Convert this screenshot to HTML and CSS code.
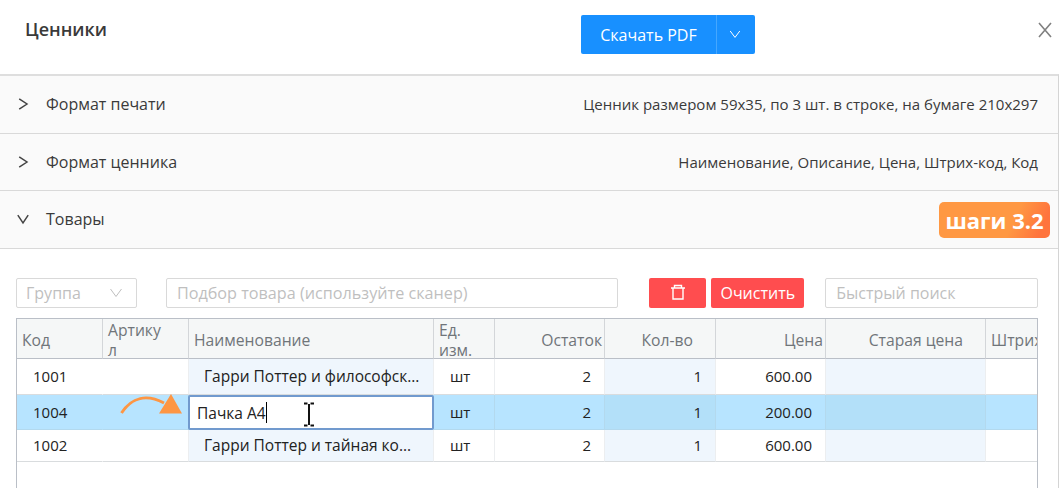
FILE: index.html
```
<!DOCTYPE html>
<html lang="ru">
<head>
    <meta charset="UTF-8">
    <meta name="viewport" content="width=device-width, initial-scale=1.0">
    <title>Ценники</title>
    <link rel="stylesheet" href="styles.css">
</head>
<body>
    <div class="modal">
        <header class="modal-header">
            <h1 class="title">Ценники</h1>
            <div class="download">
                <button class="download-btn">Скачать PDF</button>
                <button class="download-more" aria-label="Ещё">
                    <svg width="12" height="9" viewBox="0 0 12 9"><path d="M1.2 1 L6 7.4 L10.8 1"/></svg>
                </button>
            </div>
            <button class="close" aria-label="Закрыть">
                <svg width="16" height="16" viewBox="0 0 16 16"><path d="M2 1 L14 15 M14 1 L2 15"/></svg>
            </button>
        </header>

        <div class="collapse">
            <div class="panel">
                <svg class="arrow" width="14" height="14" viewBox="0 0 14 14"><path d="M3.2 1.8 L11 7 L3.2 12.2"/></svg>
                <span class="panel-name">Формат печати</span>
                <span class="panel-extra">Ценник размером 59x35, по 3 шт. в строке, на бумаге 210x297</span>
            </div>
            <div class="panel">
                <svg class="arrow" width="14" height="14" viewBox="0 0 14 14"><path d="M3.2 1.8 L11 7 L3.2 12.2"/></svg>
                <span class="panel-name">Формат ценника</span>
                <span class="panel-extra">Наименование, Описание, Цена, Штрих-код, Код</span>
            </div>
            <div class="panel">
                <svg class="arrow" width="14" height="14" viewBox="0 0 14 14"><path d="M1.8 3.2 L7 11 L12.2 3.2"/></svg>
                <span class="panel-name">Товары</span>
                <span class="step-badge">шаги 3.2</span>
            </div>

            <div class="content">
                <div class="toolbar">
                    <div class="field group"><span>Группа</span>
                        <svg width="14" height="10" viewBox="0 0 14 10"><path d="M1.5 1 L7 8.5 L12.5 1"/></svg>
                    </div>
                    <div class="field pick"><span>Подбор товара (используйте сканер)</span></div>
                    <button class="danger trash" aria-label="Удалить">
                        <svg width="16" height="17" viewBox="0 0 16 17"><path d="M1 4 H15 M4.5 4 V1.5 H11.5 V4 M3 4 V15 H13 V4"/></svg>
                    </button>
                    <button class="danger clear">Очистить</button>
                    <div class="field search"><span>Быстрый поиск</span></div>
                </div>

                <div class="table">
                    <div class="row head">
                        <div>Код</div>
                        <div>Артику<br>л</div>
                        <div>Наименование</div>
                        <div>Ед.<br>изм.</div>
                        <div class="num">Остаток</div>
                        <div class="num edit-head">Кол-во</div>
                        <div class="num">Цена</div>
                        <div class="num edit-head">Старая цена</div>
                        <div>Штрихкод</div>
                    </div>
                    <div class="row first">
                        <div>1001</div>
                        <div></div>
                        <div class="edit name">Гарри Поттер и философск...</div>
                        <div>шт</div>
                        <div class="num">2</div>
                        <div class="num edit">1</div>
                        <div class="num">600.00</div>
                        <div class="num edit"></div>
                        <div></div>
                    </div>
                    <div class="row selected">
                        <div>1004</div>
                        <div class="pointer">
                            <svg width="64" height="24" viewBox="0 0 64 24">
                                <path class="curve" d="M1.5 19 C12 3 27 0 44 9"/>
                                <path class="tip" d="M51 0 L62 19.5 L39 19.5 Z"/>
                            </svg>
                        </div>
                        <div class="edit name editor">Пачка А4<i class="caret"></i>
                            <svg class="ibeam" width="12" height="25" viewBox="0 0 12 25"><path d="M1 1.5 H4.5 M7.5 1.5 H11 M6 2 V23 M1 23.5 H4.5 M7.5 23.5 H11"/></svg>
                        </div>
                        <div>шт</div>
                        <div class="num">2</div>
                        <div class="num edit">1</div>
                        <div class="num">200.00</div>
                        <div class="num edit"></div>
                        <div></div>
                    </div>
                    <div class="row last">
                        <div>1002</div>
                        <div></div>
                        <div class="edit name">Гарри Поттер и тайная ко...</div>
                        <div>шт</div>
                        <div class="num">2</div>
                        <div class="num edit">1</div>
                        <div class="num">600.00</div>
                        <div class="num edit"></div>
                        <div></div>
                    </div>
                </div>
            </div>
        </div>
    </div>
</body>
</html>
```

FILE: styles.css
```
* {
    box-sizing: border-box;
}
body {
    margin: 0;
    background: #fff;
    color: #3a3a3a;
    font-family: "Open Sans", "Noto Sans", sans-serif;
    font-size: 16px;
}
.modal {
    height: 488px;
    overflow: hidden;
}
svg {
    display: block;
    flex: none;
    fill: none;
    stroke: currentColor;
}
button {
    border: none;
    padding: 0;
    font: inherit;
    color: #fff;
    display: flex;
    align-items: center;
    justify-content: center;
}

/* header */
.modal-header {
    height: 74px;
    display: flex;
    align-items: flex-start;
}
.title {
    width: 581px;
    margin: 0;
    padding: 17px 0 0 25px;
    font-size: 18px;
    line-height: 24px;
    font-weight: 600;
}
.download {
    display: flex;
    margin-top: 15px;
    height: 39px;
    border-radius: 2px;
    overflow: hidden;
}
.download button {
    background: #1890ff;
}
.download-btn {
    width: 135px;
}
.download .download-more {
    width: 39px;
    border-left: 1px solid #45a7ff;
    padding-right: 2px;
}
.close {
    margin: 22px 7px 0 auto;
    background: none;
    color: #808080;
}
.close svg {
    stroke-width: 1.6;
}

/* collapse */
.collapse {
    width: 1059px;
    height: 414px;
    border-top: 2px solid #dedede;
    border-right: 1px solid #d4d4d4;
}
.panel {
    height: 57.5px;
    display: flex;
    align-items: center;
    padding: 0 20px 0 16px;
    background: #fafafa;
    border-bottom: 1px solid #d9d9d9;
}
.arrow {
    margin-right: 16px;
    color: #444;
    stroke-width: 1.5;
}
.panel-extra {
    margin-left: auto;
    font-size: 15.03px;
}
.step-badge {
    margin: 2px -12px 0 auto;
    width: 111px;
    height: 36px;
    display: flex;
    align-items: center;
    justify-content: center;
    border-radius: 5px;
    background: linear-gradient(115deg, #ff9843 65%, #ff743d 90%);
    color: #fff;
    font-size: 22px;
    font-weight: 700;
}

/* toolbar */
.content {
    height: 240px;
    padding: 29px 20px 0 16px;
}
.toolbar {
    display: flex;
    height: 30px;
}
.field {
    display: flex;
    align-items: center;
    padding: 0 10px;
    border: 1px solid #d9d9d9;
    border-radius: 2px;
    color: #bfbfbf;
    height: 30px;
}
.group {
    width: 121px;
    margin-right: 29px;
    justify-content: space-between;
    padding: 0 13px 0 9px;
}
.pick {
    width: 453px;
    margin-right: 31px;
    font-size: 16.2px;
}
.danger {
    height: 30px;
    background: #ff4d4f;
    border-radius: 2px;
}
.trash {
    width: 57px;
    margin-right: 5px;
}
.trash svg {
    stroke-width: 1.4;
}
.clear {
    width: 93px;
    margin-right: 21px;
}
.search {
    width: 213px;
}

/* table */
.table {
    margin-top: 10px;
    height: 171px;
    border: 1px solid #babfc7;
    border-bottom: none;
    overflow: hidden;
}
.row {
    display: grid;
    grid-template-columns: 86px 86px 245px 61px 110px 111px 110px 160px 150px;
    grid-template-rows: 100%;
    height: 35px;
    color: #222;
    font-size: 15px;
}
.row > div {
    display: flex;
    align-items: center;
    padding: 0 13px 0 16px;
    border-right: 1px solid #eceef0;
    border-bottom: 1px solid #d9dcde;
    white-space: nowrap;
}
.row > div:first-child {
    border-right-color: transparent;
}
.row > .num {
    justify-content: flex-end;
}
.row .edit {
    background: #eff6fd;
}
.row > .name {
    padding-left: 15px;
    font-size: 15.5px;
}
.row.first {
    height: 36px;
}
.row.last {
    height: 32px;
}
.head {
    height: 40px;
    background: #f5f7f7;
    color: #70757a;
    font-size: 15.7px;
    line-height: 20px;
}
.row.head > div {
    padding: 4px 2px 0 5px;
    border-right-color: #d3d6d9;
    border-bottom-color: #babfc7;
}
.row.head > .edit-head {
    padding-right: 22px;
}
.selected {
    background: #b7e4ff;
}
.selected > div {
    border-color: #b3d9ee;
}
.selected .edit {
    background: #b3e0f9;
}
.row.selected > .editor {
    position: relative;
    margin-left: -1px;
    padding: 2px 0 0 7px;
    background: #fff;
    border: 2px solid #719ace;
    border-radius: 2px;
}
.caret {
    width: 1px;
    height: 21px;
    margin-bottom: 1px;
    background: #000;
}
.ibeam {
    position: absolute;
    left: 113px;
    top: 5px;
    color: #111;
    stroke-width: 2;
}
.pointer {
    position: relative;
}
.pointer svg {
    position: absolute;
    left: 17px;
    top: -1px;
    color: #fd9644;
}
.curve {
    stroke-width: 3;
}
.tip {
    fill: #fd9644;
    stroke: none;
}
```
